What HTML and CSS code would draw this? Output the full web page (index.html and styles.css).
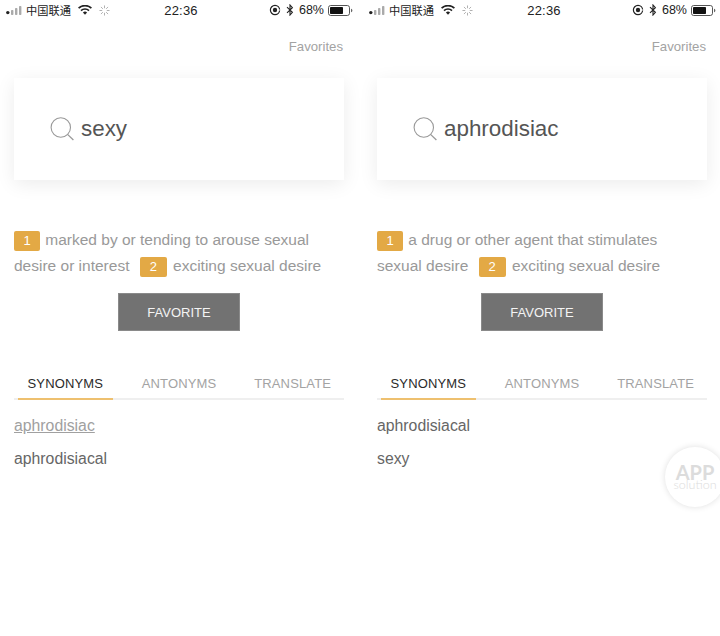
FILE: index.html
```html
<!DOCTYPE html>
<html lang="en">
<head>
<meta charset="utf-8">
<title>Dictionary</title>
<link rel="stylesheet" href="styles.css">
</head>
<body>
<svg class="defs" width="0" height="0" aria-hidden="true">
  <defs>
    <symbol id="signal" viewBox="0 0 17 9">
      <circle cx="1.8" cy="6.6" r="1.7" fill="#222"/>
      <rect x="5" y="4" width="2.4" height="5" rx=".8" fill="#aaa"/>
      <rect x="9" y="2" width="2.4" height="7" rx=".8" fill="#aaa"/>
      <rect x="13" y="0" width="2.4" height="9" rx=".8" fill="#aaa"/>
    </symbol>
    <symbol id="wifi" viewBox="0 0 14 10">
      <path d="M.6 3.2a9.2 9.2 0 0 1 12.8 0" fill="none" stroke="#222" stroke-width="1.7"/>
      <path d="M3 5.6a5.8 5.8 0 0 1 8 0" fill="none" stroke="#222" stroke-width="1.7"/>
      <path d="M7 9.8 4.9 7.6a3 3 0 0 1 4.2 0z" fill="#222"/>
    </symbol>
    <symbol id="spinner" viewBox="0 0 12 12">
      <path d="M6 .5v3M6 8.5v3M.5 6h3M8.5 6h3M2.1 2.1l2.1 2.1M7.8 7.8l2.1 2.1M2.1 9.9l2.1-2.1M7.8 4.2l2.1-2.1" fill="none" stroke="#aaa" stroke-width="1"/>
    </symbol>
    <symbol id="lock" viewBox="0 0 12 12">
      <circle cx="6" cy="6" r="4.6" fill="none" stroke="#222" stroke-width="1.2"/>
      <circle cx="6" cy="6" r="2.2" fill="#222"/>
      <path d="M8 6h3.5" stroke="#fff" stroke-width="1"/>
    </symbol>
    <symbol id="bt" viewBox="0 0 8 12">
      <path d="M1 3.2 6.4 8.3 4 11V1l2.4 2.7L1 8.8" fill="none" stroke="#222" stroke-width="1.1"/>
    </symbol>
    <symbol id="battery" viewBox="0 0 25 11">
      <rect x=".5" y=".5" width="21" height="10" rx="2.2" fill="none" stroke="#555"/>
      <rect x="2" y="2" width="13" height="7" rx=".8" fill="#111"/>
      <path d="M23 3.8c1 .3 1.4 1 1.4 1.7s-.4 1.4-1.4 1.7z" fill="#666"/>
    </symbol>
    <symbol id="search" viewBox="0 0 24 24">
      <circle cx="10.8" cy="10.5" r="9.7" fill="none" stroke="#999" stroke-width="1.1"/>
      <path d="m17.8 17.6 5.6 5.4" fill="none" stroke="#999" stroke-width="1.3"/>
    </symbol>
  </defs>
</svg>

<main class="screens">
  <section class="phone">
    <header class="status">
      <div class="status-left">
        <svg class="i-signal"><use href="#signal"/></svg>
        <span class="carrier">中国联通</span>
        <svg class="i-wifi"><use href="#wifi"/></svg>
        <svg class="i-spinner"><use href="#spinner"/></svg>
      </div>
      <div class="status-time">22:36</div>
      <div class="status-right">
        <svg class="i-lock"><use href="#lock"/></svg>
        <svg class="i-bt"><use href="#bt"/></svg>
        <span>68%</span>
        <svg class="i-battery"><use href="#battery"/></svg>
      </div>
    </header>
    <div class="fav-link">Favorites</div>
    <div class="search-card">
      <svg class="i-search"><use href="#search"/></svg>
      <span class="query">sexy</span>
    </div>
    <p class="definition"><span class="badge">1</span> marked by or tending to arouse sexual desire or interest <span class="badge badge-two">2</span> exciting sexual desire</p>
    <div class="action"><button class="favorite">FAVORITE</button></div>
    <nav class="tabs">
      <span class="tab active">SYNONYMS</span>
      <span class="tab">ANTONYMS</span>
      <span class="tab">TRANSLATE</span>
    </nav>
    <ul class="words">
      <li class="word visited">aphrodisiac</li>
      <li class="word">aphrodisiacal</li>
    </ul>
  </section>

  <section class="phone">
    <header class="status">
      <div class="status-left">
        <svg class="i-signal"><use href="#signal"/></svg>
        <span class="carrier">中国联通</span>
        <svg class="i-wifi"><use href="#wifi"/></svg>
        <svg class="i-spinner"><use href="#spinner"/></svg>
      </div>
      <div class="status-time">22:36</div>
      <div class="status-right">
        <svg class="i-lock"><use href="#lock"/></svg>
        <svg class="i-bt"><use href="#bt"/></svg>
        <span>68%</span>
        <svg class="i-battery"><use href="#battery"/></svg>
      </div>
    </header>
    <div class="fav-link">Favorites</div>
    <div class="search-card">
      <svg class="i-search"><use href="#search"/></svg>
      <span class="query">aphrodisiac</span>
    </div>
    <p class="definition"><span class="badge">1</span> a drug or other agent that stimulates sexual desire <span class="badge badge-two">2</span> exciting sexual desire</p>
    <div class="action"><button class="favorite">FAVORITE</button></div>
    <nav class="tabs">
      <span class="tab active">SYNONYMS</span>
      <span class="tab">ANTONYMS</span>
      <span class="tab">TRANSLATE</span>
    </nav>
    <ul class="words">
      <li class="word">aphrodisiacal</li>
      <li class="word">sexy</li>
    </ul>
  </section>
</main>

<aside class="watermark"><span class="wm-app">APP</span><span class="wm-sol">solution</span></aside>
</body>
</html>
```
FILE: styles.css
```css
* { box-sizing: border-box; }
html, body { margin: 0; padding: 0; background: #fff; }
body {
  position: relative;
  width: 720px;
  height: 636px;
  overflow: hidden;
  font-family: "Liberation Sans", "Noto Sans CJK SC", sans-serif;
}
.defs { position: absolute; }
.screens { display: grid; grid-template-columns: 363px 363px; }
.phone { display: flex; flex-direction: column; padding-left: 14px; }

.status {
  margin-left: -14px;
  height: 20px;
  padding: 0 7px 0 6px;
  display: grid;
  grid-template-columns: 1fr auto 1fr;
  align-items: center;
  font-size: 12px;
  color: #222;
}
.status-left, .status-right { display: flex; align-items: center; }
.status-right { justify-content: flex-end; padding-right: 3px; }
.status-time { font-size: 13px; letter-spacing: .2px; }
.carrier { font-size: 11.25px; margin-left: 3px; }
.i-signal { width: 17px; height: 9px; }
.i-wifi { width: 14px; height: 10px; margin-left: 7px; }
.i-spinner { width: 11px; height: 11px; margin-left: 7px; }
.i-lock { width: 12px; height: 12px; }
.i-bt { width: 8px; height: 12px; margin: 0 5px 0 5px; }
.status-right span { font-size: 12.5px; margin-right: 4px; }
.i-battery { width: 25px; height: 11px; }

.fav-link {
  margin-top: 19px;
  width: 329px;
  height: 15px;
  line-height: 15px;
  text-align: right;
  font-size: 13.2px;
  color: #a3a3a3;
}

.search-card {
  margin-top: 24px;
  width: 330px;
  height: 102px;
  display: flex;
  align-items: center;
  padding-left: 36px;
  background: #fff;
  box-shadow: 0 4px 18px rgba(0, 0, 0, .08);
}
.i-search { width: 24px; height: 24px; margin-right: 7px; flex: none; }
.query { font-size: 22.4px; color: #555; }

.definition {
  width: 325px;
  margin: 47px 0 0;
  font-size: 15.5px;
  line-height: 26px;
  color: #999;
}
.badge {
  display: inline-block;
  width: 26px;
  height: 20px;
  margin-right: 1px;
  line-height: 20px;
  border-radius: 2px;
  text-align: center;
  font-size: 13px;
  color: #fff;
  background: #e3a945;
}
.badge-two { width: 27px; margin: 0 2px 0 6px; }

.action { width: 330px; display: flex; justify-content: center; margin-top: 14px; }
.favorite {
  width: 122px;
  height: 38px;
  padding: 0;
  border: 1px solid #8a8a8a;
  background: #727272;
  color: #f4f4f4;
  font: 13px "Liberation Sans", sans-serif;
}

.tabs {
  margin-top: 41px;
  width: 330px;
  height: 28px;
  display: grid;
  grid-template-columns: repeat(3, 1fr);
  padding: 0 4px;
  column-gap: 19px;
  border-bottom: 2px solid #efefef;
}
.tab {
  height: 28px;
  line-height: 24px;
  text-align: center;
  font-size: 13px;
  color: #a3a3a3;
  letter-spacing: .15px;
}
.tab.active { color: #2a2a2a; border-bottom: 2px solid #eec06f; }

.words { list-style: none; margin: 10px 0 0; padding: 0; }
.word { height: 32.5px; line-height: 32px; font-size: 15.8px; color: #666; }
.word.visited { color: #a0a0a0; text-decoration: underline; }

.watermark {
  position: absolute;
  left: 665px;
  top: 447px;
  width: 60px;
  height: 60px;
  border-radius: 50%;
  background: #fff;
  box-shadow: 0 0 6px rgba(0, 0, 0, .13);
  display: flex;
  flex-direction: column;
  align-items: center;
  justify-content: center;
  color: #dcdcdc;
  font-family: Lato, sans-serif;
  line-height: 1;
}
.wm-app { font-size: 20px; font-weight: 700; }
.wm-sol { font-size: 12.5px; font-weight: 300; margin-top: -3px; }
```
